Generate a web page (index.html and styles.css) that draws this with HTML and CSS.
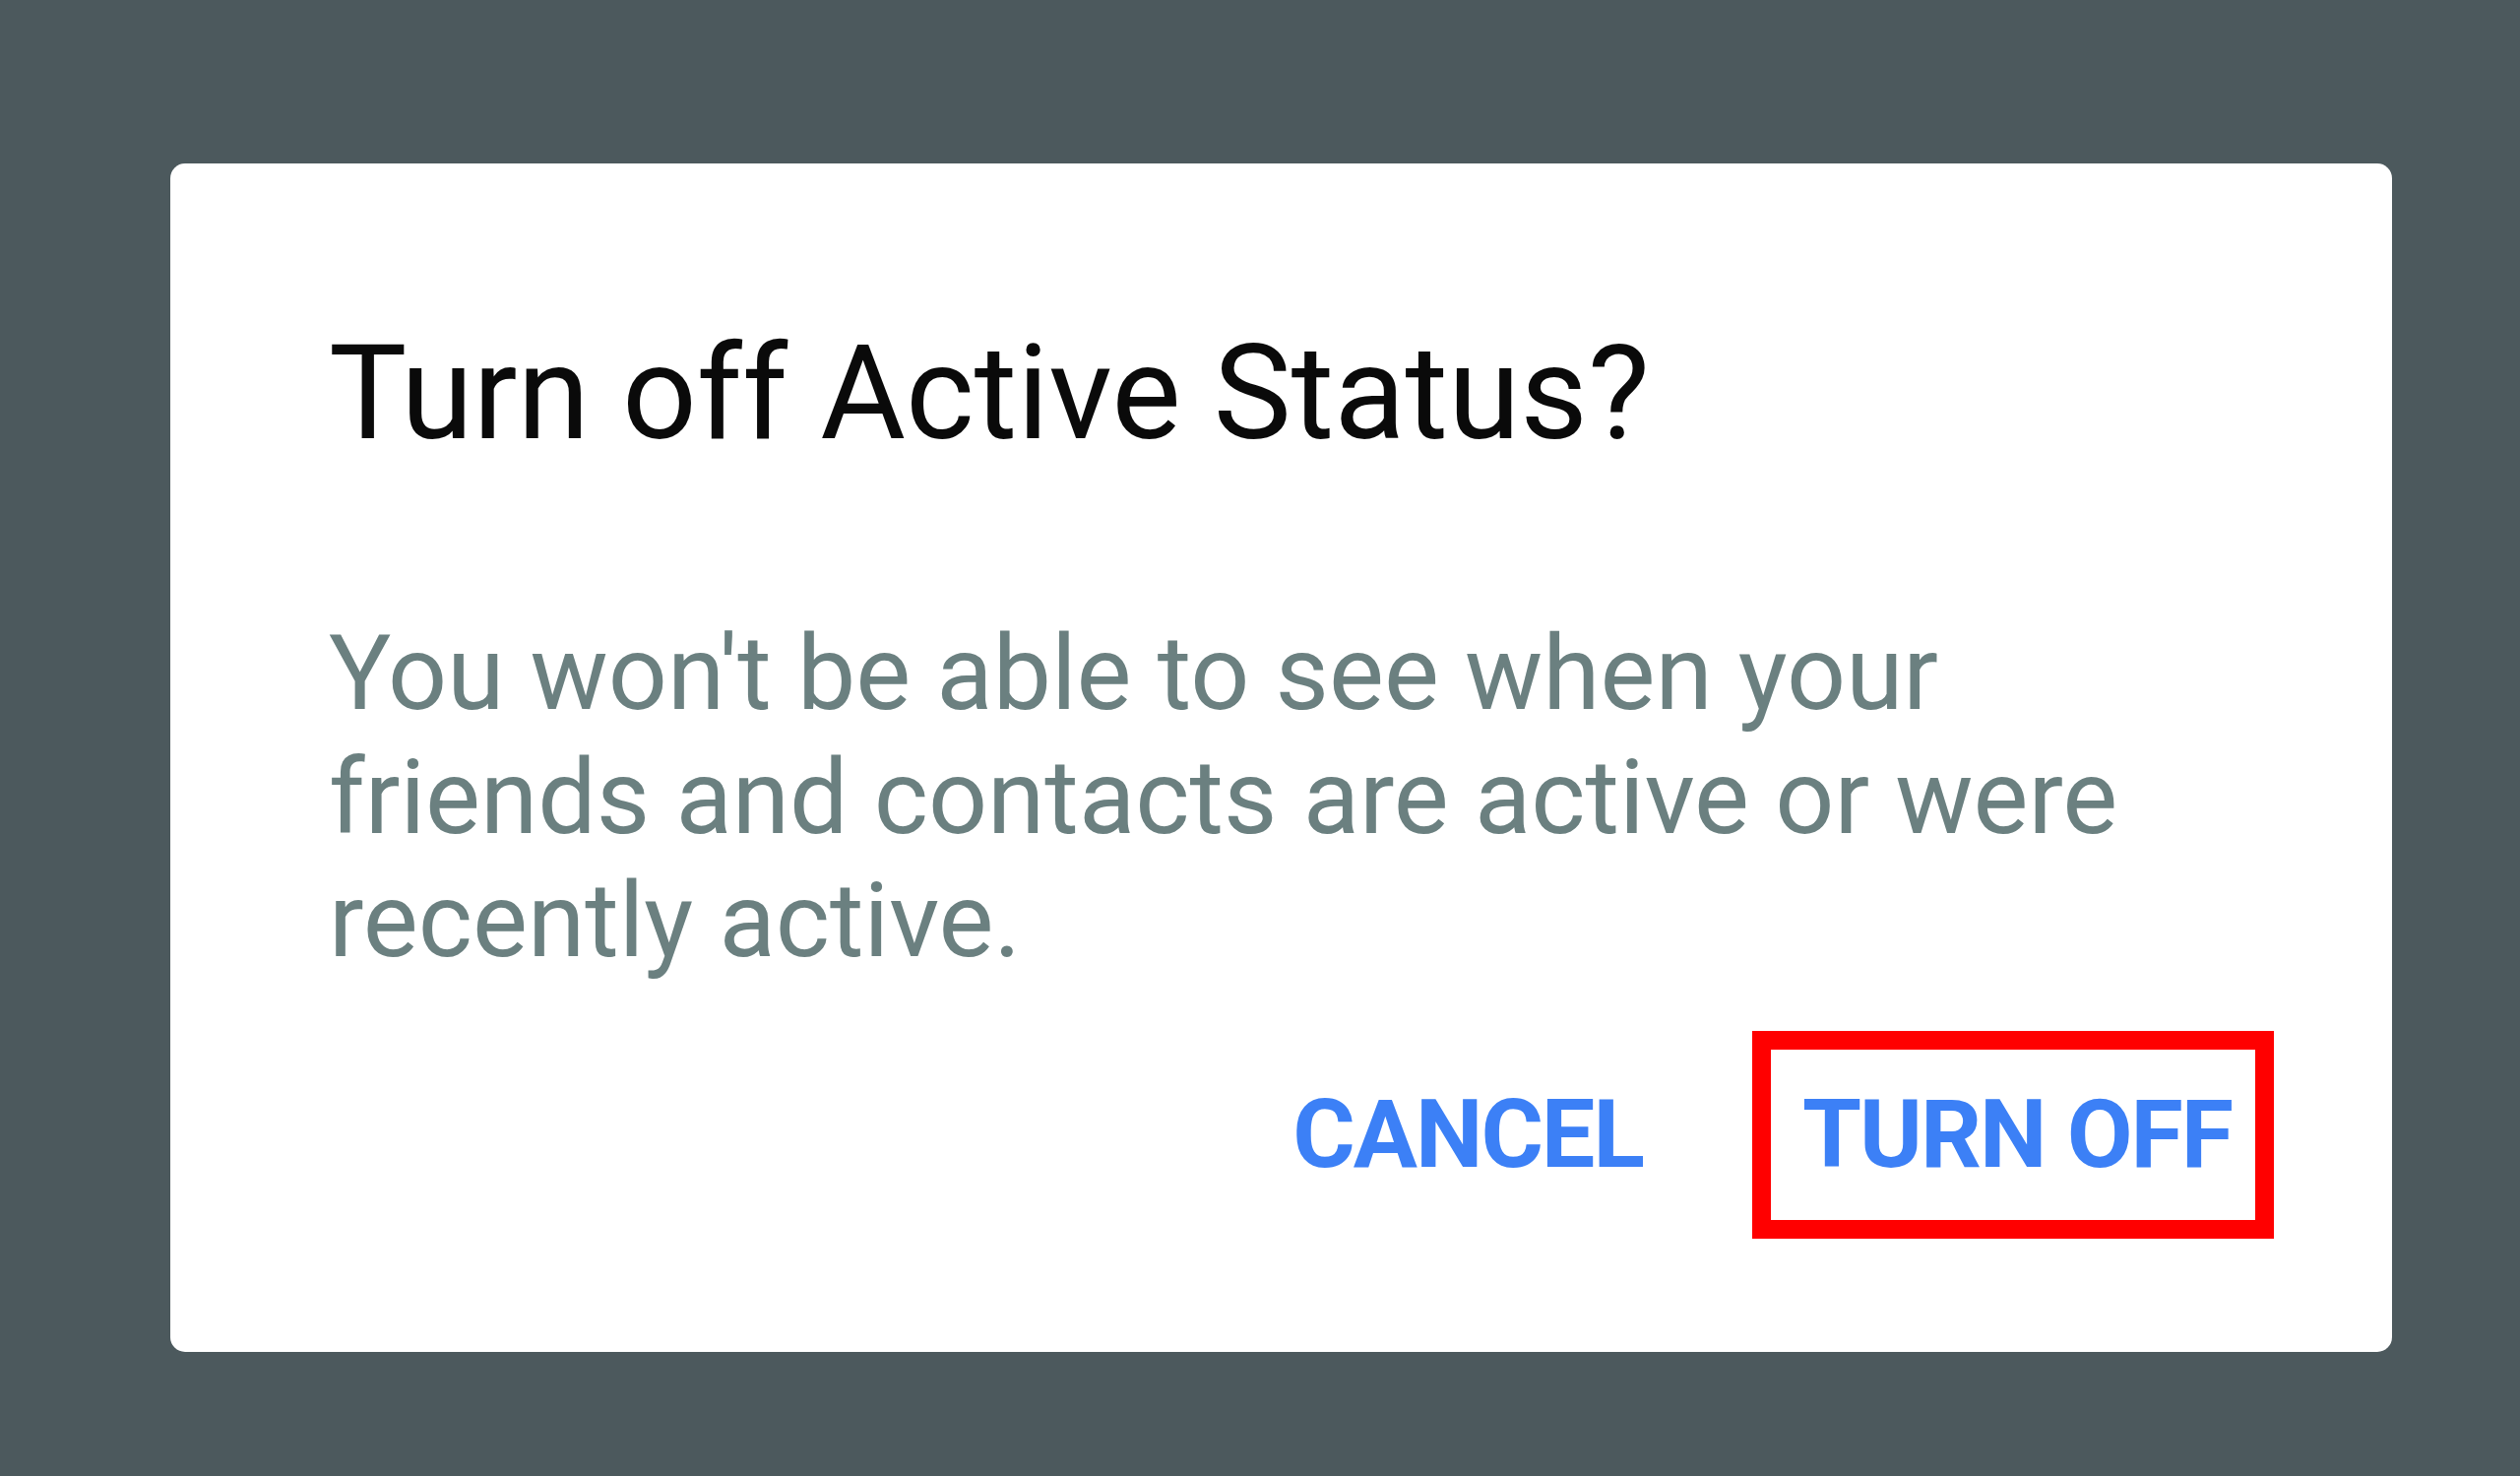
FILE: index.html
```html
<!DOCTYPE html>
<html lang="en">
<head>
    <meta charset="UTF-8">
    <meta name="viewport" content="width=device-width, initial-scale=1.0">
    <title>Turn off Active Status?</title>
    <link rel="stylesheet" href="styles.css">
</head>
<body>
    <div class="dialog" role="dialog" aria-labelledby="dialog-title">
        <h1 class="dialog__title" id="dialog-title">Turn off Active Status?</h1>
        <p class="dialog__text">You won't be able to see when your friends and contacts are active or were recently active.</p>
        <div class="dialog__actions">
            <button class="dialog__button" type="button">Cancel</button>
            <button class="dialog__button dialog__button--marked" type="button">Turn off</button>
        </div>
    </div>
</body>
</html>
```

FILE: styles.css
```css
* {
    border: 0;
    box-sizing: border-box;
    margin: 0;
    padding: 0;
}
:root {
    --bg: hsl(194,10%,33%);
    --card: hsl(0,0%,100%);
    --title: hsl(0,0%,4%);
    --text: hsl(180,9%,46%);
    --accent: hsl(218,91%,60%);
    --mark: hsl(0,100%,50%);
}
body {
    background-color: var(--bg);
    font-family: Roboto, "Noto Sans", sans-serif;
    height: 100vh;
    overflow: hidden;
    padding: 166px 0 0 173px;
}
.dialog {
    background-color: var(--card);
    border-radius: 15px;
    display: flex;
    flex-direction: column;
    width: 2257px;
    height: 1207px;
    padding: 0 120px 0 161px;
}
.dialog__title {
    color: var(--title);
    font-size: 133px;
    font-weight: 400;
    line-height: 1;
    margin-top: 167px;
}
.dialog__text {
    color: var(--text);
    font-size: 105.5px;
    line-height: 125.5px;
    margin-top: 156px;
    max-width: 1950px;
}
.dialog__actions {
    display: flex;
    align-items: center;
    justify-content: flex-end;
    gap: 111px;
    margin-top: 48px;
}
.dialog__button {
    background: none;
    color: var(--accent);
    cursor: pointer;
    font: 700 97px/1 Roboto, "Noto Sans", sans-serif;
    letter-spacing: -2px;
    text-transform: uppercase;
}
.dialog__button--marked {
    border: 19px solid var(--mark);
    height: 211px;
    padding: 0 24px 0 32px;
}
```
